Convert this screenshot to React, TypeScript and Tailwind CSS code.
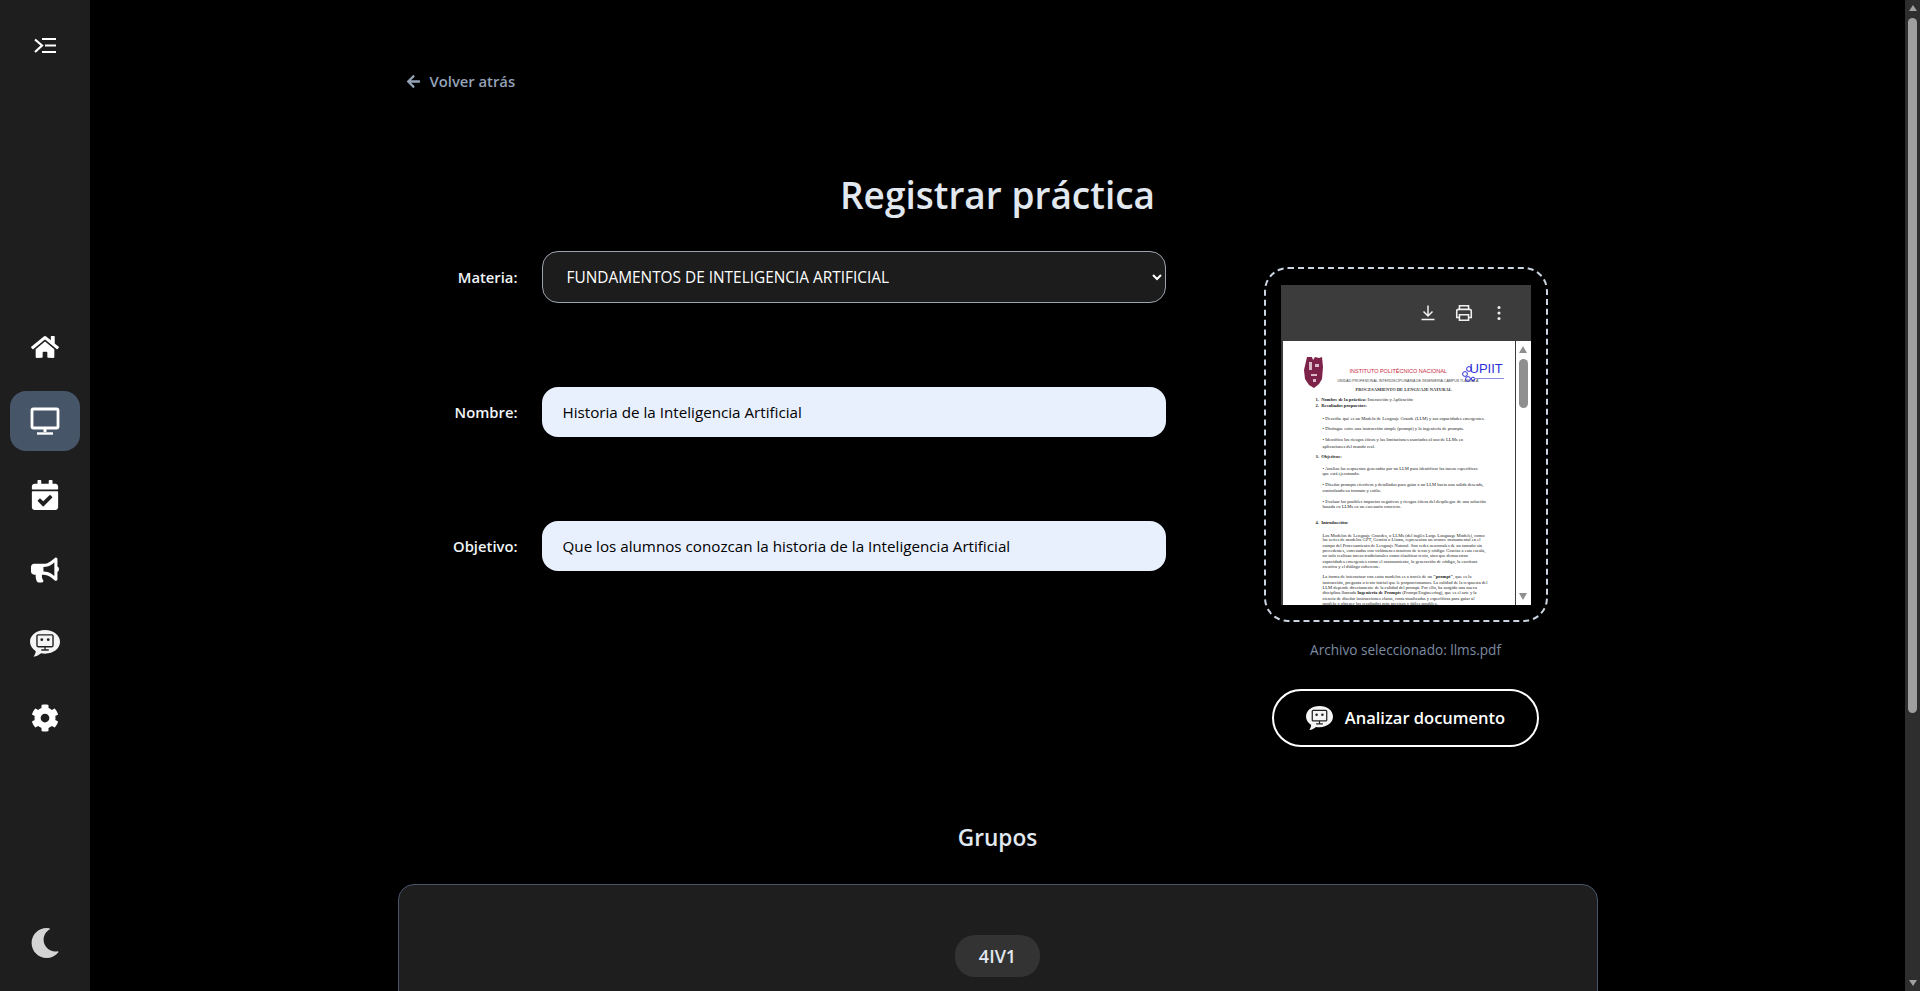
import { FaArrowLeft, FaBullhorn, FaCalendarCheck, FaCog, FaHome, FaMoon } from "react-icons/fa";
import type { ReactNode } from "react";

function MenuIcon() {
	return (
		<svg width="24" height="18" viewBox="0 0 24 18" fill="none" stroke="#fff" strokeWidth="2.2">
			<path d="M2 2.5 9 8.5 2 15" />
			<path d="M9 2h14M12 8.5h11M9 15h14" />
		</svg>
	);
}

function MonitorIcon() {
	return (
		<svg width="30" height="28" viewBox="0 0 30 28" fill="none" stroke="#fff">
			<rect x="2" y="2" width="26" height="19" rx="1.5" strokeWidth="2.8" />
			<path d="M15 21v4" strokeWidth="3" />
			<path d="M7 26.5h16" strokeWidth="2.4" />
		</svg>
	);
}

function BotChatIcon({ size }: { size: number }) {
	return (
		<svg width={size} height={size} viewBox="0 0 28 26">
			<path
				d="M14 0C6 0 0 4.800 0 11c0 3.700 2.100 6.700 5.400 8.700C5.200 21.500 4.300 23.400 3.400 25c2.600-.4 5.300-1.900 7-3.300 1.100.2 2.400.3 3.600.3 8 0 14-4.800 14-11S22 0 14 0z"
				fill="#f5f5f5"
			/>
			<rect x="6.500" y="4.500" width="15" height="11" rx="1" fill="none" stroke="#222" strokeWidth="1.300" />
			<circle cx="11" cy="9" r="1.300" fill="#222" />
			<circle cx="17" cy="9" r="1.300" fill="#222" />
			<path d="M14 15.500v2.500M10.500 18.600h7" stroke="#222" strokeWidth="1.200" />
		</svg>
	);
}

function NavItem({ active, children }: { active?: boolean; children: ReactNode }) {
	return (
		<div
			className={`flex h-[60px] w-[70px] items-center justify-center rounded-2xl text-white ${
				active ? "bg-[#475569]" : ""
			}`}
		>
			{children}
		</div>
	);
}

function Sidebar() {
	return (
		<aside className="flex h-full w-[90px] shrink-0 flex-col items-center bg-[#1e1e1e] pt-[37px] pb-[18px]">
			<MenuIcon />
			<nav className="mt-[262px] flex flex-col gap-[14.2px]">
				<NavItem>
					<FaHome className="text-[28px]" />
				</NavItem>
				<NavItem active>
					<MonitorIcon />
				</NavItem>
				<NavItem>
					<FaCalendarCheck className="text-[30px]" />
				</NavItem>
				<NavItem>
					<FaBullhorn className="text-[28px]" />
				</NavItem>
				<NavItem>
					<BotChatIcon size={30} />
				</NavItem>
				<NavItem>
					<FaCog className="text-[28px]" />
				</NavItem>
			</nav>
			<div className="mt-auto flex h-[60px] items-center text-[#d4d4d4]">
				<FaMoon className="text-[30px]" />
			</div>
		</aside>
	);
}

function Field({ label, children }: { label: string; children: ReactNode }) {
	return (
		<div className="flex items-center gap-6">
			<label className="w-[120px] text-right text-[14.8px] font-semibold text-[#f1f5f9]">{label}</label>
			{children}
		</div>
	);
}

type Line = { text: ReactNode; top: number; left?: number };

const pdfLines: Line[] = [
	{ text: <><b>1.&nbsp;&nbsp;Nombre de la práctica:</b> Interacción y Aplicación</>, top: 397, left: 1316 },
	{ text: <b>2.&nbsp;&nbsp;Resultados propuestos:</b>, top: 403.5, left: 1316 },
	{ text: "•  Describe qué es un Modelo de Lenguaje Grande (LLM) y sus capacidades emergentes.", top: 416 },
	{ text: "•  Distingue entre una instrucción simple (prompt) y la ingeniería de prompts.", top: 426.5 },
	{ text: "•  Identifica los riesgos éticos y las limitaciones asociadas al uso de LLMs en", top: 437.5 },
	{ text: "aplicaciones del mundo real.", top: 444 },
	{ text: <b>3.&nbsp;&nbsp;Objetivos:</b>, top: 454, left: 1316 },
	{ text: "•  Analiza las respuestas generadas por un LLM para identificar las tareas específicas", top: 466 },
	{ text: "que está ejecutando.", top: 471.5 },
	{ text: "•  Diseñar prompts efectivos y detallados para guiar a un LLM hacia una salida deseada,", top: 482.5 },
	{ text: "controlando su formato y estilo.", top: 488 },
	{ text: "•  Evaluar los posibles impactos negativos y riesgos éticos del despliegue de una solución", top: 499 },
	{ text: "basada en LLMs en un escenario concreto.", top: 504 },
	{ text: <b>4.&nbsp;&nbsp;Introducción:</b>, top: 520.5, left: 1316 },
	{ text: "Los Modelos de Lenguaje Grandes, o LLMs (del inglés Large Language Models), como", top: 533 },
	{ text: "las series de modelos GPT, Gemini o Llama, representan un avance monumental en el", top: 537.5 },
	{ text: "campo del Procesamiento de Lenguaje Natural. Son redes neuronales de un tamaño sin", top: 543 },
	{ text: "precedentes, entrenadas con volúmenes masivos de texto y código. Gracias a esta escala,", top: 548.5 },
	{ text: "no solo realizan tareas tradicionales como clasificar texto, sino que demuestran", top: 553.5 },
	{ text: "capacidades emergentes como el razonamiento, la generación de código, la escritura", top: 559 },
	{ text: "creativa y el diálogo coherente.", top: 564 },
	{ text: <>La forma de interactuar con estos modelos es a través de un <b>"prompt"</b>, que es la</>, top: 574.5 },
	{ text: "instrucción, pregunta o texto inicial que le proporcionamos. La calidad de la respuesta del", top: 580 },
	{ text: "LLM depende directamente de la calidad del prompt. Por ello, ha surgido una nueva", top: 585.5 },
	{ text: <>disciplina llamada <b>Ingeniería de Prompts</b> (Prompt Engineering), que es el arte y la</>, top: 590.5 },
	{ text: "ciencia de diseñar instrucciones claras, contextualizadas y específicas para guiar al", top: 596 },
	{ text: "modelo y obtener los resultados más precisos y útiles posibles.", top: 601 },
];

// the embedded pdf is a picture of a free page, so its lines keep their own place
function PdfPage() {
	return (
		<div className="relative flex-1 overflow-hidden bg-white font-['Liberation_Serif',serif] text-[4.600px] leading-[5.200px] text-[#222]">
			<svg className="absolute left-[21px] top-[15px]" width="20" height="33" viewBox="0 0 20 33" preserveAspectRatio="none">
				<path d="M3 1h5l1 3 2-3 4 1 3-1 1 10-1 12-3 5-5 4-5-3-4-6L0 14z" fill="#7d2248" />
				<path d="M5 6h3v8H5zM11 8h4v3h-4zM7 18h6v2H7zM9 23h3v3H9z" fill="#d9b9c6" />
			</svg>
			<div className="absolute left-[67px] top-[27px] whitespace-nowrap font-['Liberation_Sans',sans-serif] text-[5.500px] leading-[7px] text-[#c8283c]">
				INSTITUTO POLITÉCNICO NACIONAL
			</div>
			<div className="absolute left-[55px] top-[38px] whitespace-nowrap font-['Liberation_Sans',sans-serif] text-[3.600px] leading-[5px] text-[#444]">
				UNIDAD PROFESIONAL INTERDISCIPLINARIA DE INGENIERÍA CAMPUS TLAXCALA
			</div>
			<div className="absolute left-[73px] top-[46.500px] whitespace-nowrap text-[4.500px] font-bold leading-[5px] text-[#333]">
				PROCESAMIENTO DE LENGUAJE NATURAL
			</div>
			<svg className="absolute left-[177px] top-[24px]" width="18" height="17" viewBox="0 0 14 17" fill="none" stroke="#2d2fd8" strokeWidth="1">
				<circle cx="7" cy="4" r="2.400" />
				<circle cx="3" cy="9" r="2.400" />
				<circle cx="6" cy="14" r="2.400" />
				<circle cx="11" cy="14" r="1.800" />
			</svg>
			<div className="absolute left-[187px] top-[21px] whitespace-nowrap font-['Liberation_Sans',sans-serif] text-[13px] leading-[14px] text-[#2d2fd8]">
				UPIIT
			</div>
			<div className="absolute left-[191px] top-[37px] h-[1px] w-[30px] bg-[#8a8be0]" />
			{pdfLines.map((l) => (
				<div
					key={l.top}
					className="absolute whitespace-nowrap"
					style={{ left: (l.left ?? 1323) - 1283, top: l.top - 341 }}
				>
					{l.text}
				</div>
			))}
		</div>
	);
}

function PdfPreview() {
	return (
		<div className="flex h-[320px] w-[250px] flex-col bg-[#3c3c3c]">
			<div className="flex h-[56px] items-center justify-end pr-[22px] text-[#f1f1f1]">
				<svg className="mr-[16px]" width="20" height="20" viewBox="0 0 20 20" fill="none" stroke="currentColor" strokeWidth="1.500">
					<path d="M10 2.500v10M5.500 8.500 10 13l4.500-4.500M3.500 16.500h13" />
				</svg>
				<svg className="mr-[15px]" width="20" height="20" viewBox="0 0 22 22" fill="none" stroke="currentColor" strokeWidth="1.700">
					<path d="M6 7V3h10v4M6 16H3V9a2 2 0 0 1 2-2h12a2 2 0 0 1 2 2v7h-3" />
					<path d="M6 13h10v6H6z" />
				</svg>
				<svg width="20" height="20" viewBox="0 0 20 20" fill="currentColor">
					<circle cx="10" cy="4.500" r="1.500" />
					<circle cx="10" cy="10" r="1.500" />
					<circle cx="10" cy="15.500" r="1.500" />
				</svg>
			</div>
			<div className="flex min-h-0 flex-1 pl-[2px]">
				<PdfPage />
				<div className="ml-px flex h-full w-[15px] flex-col items-center bg-white">
					<div className="mt-[5px] h-0 w-0 border-x-[4.500px] border-b-[7px] border-x-transparent border-b-[#8f8f8f]" />
					<div className="mt-[6px] h-[49px] w-[9px] rounded-full bg-[#8f8f8f]" />
					<div className="mt-auto mb-[5px] h-0 w-0 border-x-[4.500px] border-t-[7px] border-x-transparent border-t-[#8f8f8f]" />
				</div>
			</div>
		</div>
	);
}

function FakeScrollbar() {
	return (
		<div className="flex h-full w-[15px] shrink-0 flex-col items-center bg-[#2e2e2e]">
			<div className="mt-[5px] h-0 w-0 border-x-[4.500px] border-b-[6px] border-x-transparent border-b-[#a0a0a0]" />
			<div className="mt-[7px] h-[695px] w-[9px] rounded-full bg-[#9f9f9f]" />
			<div className="mt-auto mb-[5px] h-0 w-0 border-x-[4.500px] border-t-[6px] border-x-transparent border-t-[#a0a0a0]" />
		</div>
	);
}

export default function App() {
	return (
		<div className="flex h-screen overflow-hidden bg-black font-['Open_Sans',sans-serif] text-white">
			<Sidebar />
			<main className="min-w-0 flex-1 overflow-hidden">
				<div className="mx-auto w-[1200px] pt-[69px]">
					<a className="flex items-center gap-[9px] pl-2 text-[14.8px] font-semibold leading-6 text-[#94a3b8]">
						<FaArrowLeft className="text-[15px]" />
						<span>Volver atrás</span>
					</a>
					<h1 className="mt-[72px] text-center text-[37px] font-semibold leading-[60px] text-[#e2e8f0]">
						Registrar práctica
					</h1>
					<div className="mt-[26px] flex">
						<div className="flex flex-col gap-[84px]">
							<Field label="Materia:">
								<select className="h-[52px] w-[624px] rounded-2xl border border-[#9ca3af] bg-[#1c1c1c] px-5 text-[15.4px] text-white [color-scheme:dark]">
									<option>FUNDAMENTOS DE INTELIGENCIA ARTIFICIAL</option>
								</select>
							</Field>
							<Field label="Nombre:">
								<input
									readOnly
									defaultValue="Historia de la Inteligencia Artificial"
									className="h-[50px] w-[624px] rounded-2xl bg-[#e8f0fe] px-[21px] text-[15.2px] text-black outline-none"
								/>
							</Field>
							<Field label="Objetivo:">
								<input
									readOnly
									defaultValue="Que los alumnos conozcan la historia de la Inteligencia Artificial"
									className="h-[50px] w-[624px] rounded-2xl bg-[#e8f0fe] px-[21px] text-[15.2px] text-black outline-none"
								/>
							</Field>
						</div>
						<div className="ml-[98px] mt-4 flex w-[284px] flex-col items-center">
							<div className="flex h-[355px] w-[284px] items-center justify-center rounded-3xl border-2 border-dashed border-[#cbd5e1]">
								<PdfPreview />
							</div>
							<p className="mt-[18px] text-[13.6px] leading-5 text-[#7b8ba1]">Archivo seleccionado: llms.pdf</p>
							<button className="mt-[29px] flex h-[58px] w-[267px] items-center justify-center gap-3 rounded-full border-2 border-white text-[16.5px] font-semibold">
								<BotChatIcon size={27} />
								Analizar documento
							</button>
						</div>
					</div>
					<h2 className="mt-[75px] text-center text-[22.6px] leading-8 font-semibold text-[#e2e8f0]">Grupos</h2>
					<section className="mt-[30px] flex h-[500px] justify-center rounded-2xl border border-[#475569] bg-[#1e1e1e] pt-[50px]">
						<span className="flex h-[42px] w-[85px] items-center justify-center rounded-[20px] bg-[#333333] text-lg font-semibold text-[#e2e8f0]">
							4IV1
						</span>
					</section>
				</div>
			</main>
			<FakeScrollbar />
		</div>
	);
}
